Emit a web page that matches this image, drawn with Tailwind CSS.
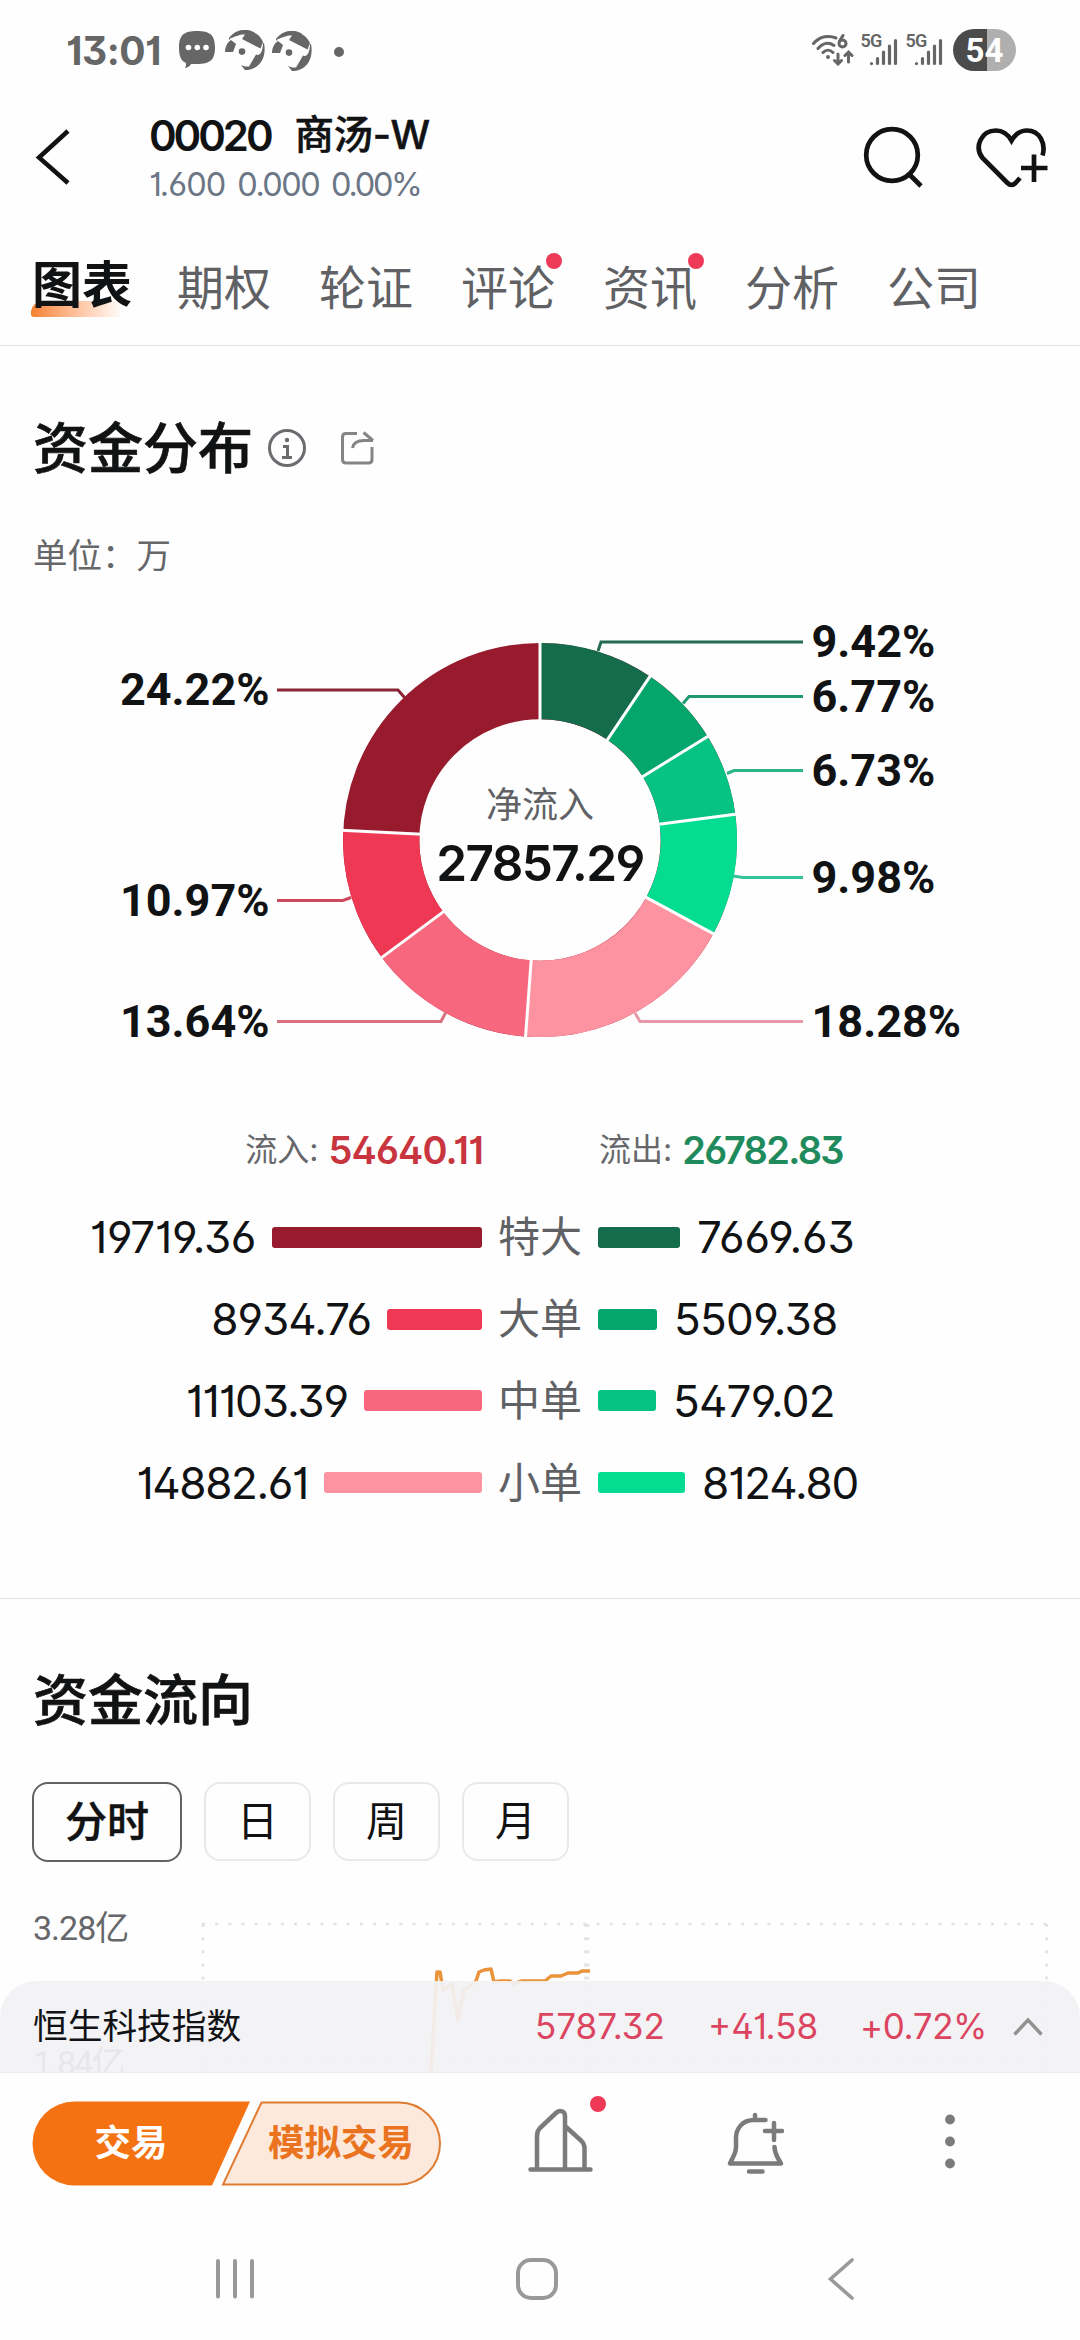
<!DOCTYPE html>
<html lang="zh-CN">
<head>
<meta charset="utf-8">
<title>00020 商汤-W</title>
<script src="https://cdn.jsdelivr.net/npm/@tailwindcss/browser@4"></script>
</head>
<body class="bg-white">
<div class="relative flex h-[2340px] w-[1080px] flex-col overflow-hidden bg-[#fefefe] font-[Inter,'Noto_Sans_CJK_SC',sans-serif] leading-none text-[#111213] [font-feature-settings:'ss01','cv01']">

  <!-- status bar -->
  <div class="flex h-[100px] items-center pl-[66px] pr-[64px] text-[#666]">
    <span class="w-[113px] text-[39px] font-bold tracking-[-0.5px]">13:01</span>
    <svg class="h-[38px] w-[36px]" viewBox="0 0 36 38" fill="#666"><path d="M18 0C31 0 36 4 36 16.500S31 33 18 33H12C11 35 9 36.500 6 37C7 35.500 7 34 7 32C2 30 0 25 0 16.500C0 4 5 0 18 0Z"/><g fill="#fff"><circle cx="9.500" cy="16.500" r="2.800"/><circle cx="18.300" cy="16.500" r="2.800"/><circle cx="27" cy="16.500" r="2.800"/></g></svg>
    <svg class="ml-[10px] h-[40px] w-[40px]" viewBox="0 0 40 40" fill="#666"><path id="bird" d="M6 8C14 -2 32 -2 38 12L35.500 18.500L17 9L20 4.500C14 4 10 7 6 8ZM0 22C0 17 2.500 12 6 10L11 14L8 22ZM4 8C12 -3 26 -1 30 3L20 2C12 2 8 6 4 10ZM39 13C42 28 34 40 20 40L16 35L20 36.500H24L31 24.500C36 27 38 19 38 13ZM17 18.300A3.300 3.300 0 1 1 17 24.900A3.300 3.300 0 1 1 17 18.300Z"/></svg>
    <svg class="ml-[7px] mt-[2px] h-[40px] w-[40px]" viewBox="0 0 40 40" fill="#666"><use href="#bird"/></svg>
    <span class="ml-[22px] mt-[3px] size-[10px] rounded-full bg-[#666]"></span>
    <svg class="ml-auto h-[32px] w-[42px]" viewBox="0 0 42 32" fill="none" stroke="#666" stroke-width="3" stroke-linecap="round"><path d="M1.500 9.500C8 2 17 1 24 4M6 14.500C11 8.500 17 8 22 11.500M11 18.500C14 15.500 18 15.500 21 18.500M26 20V30M22.500 26.500L26 30L29.500 26.500M36.500 28V18M33 21.500L36.500 18L40 21.500"/><circle cx="16" cy="23" r="1" fill="#666" stroke-width="2"/><path d="M31 1.500L27.500 7" /><circle cx="30.500" cy="9.500" r="3.500"/></svg>
    <svg class="ml-[6px] h-[40px] w-[39px]" viewBox="-1 -4 39 40" fill="#666"><text x="-0.500" y="12.500" font-family="Roboto" font-size="18" font-weight="600" letter-spacing="-0.800">5G</text><path stroke="#666" stroke-width="3.200" stroke-linecap="round" d="M10.500 29.500V29.600M16.500 24.500V29.500M22.500 18V29.500M28.500 12V29.500M34.500 6.500V29.500"/></svg>
    <svg class="ml-[6px] h-[40px] w-[39px]" viewBox="-1 -4 39 40" fill="#666"><text x="-0.500" y="12.500" font-family="Roboto" font-size="18" font-weight="600" letter-spacing="-0.800">5G</text><path stroke="#666" stroke-width="3.200" stroke-linecap="round" d="M10.500 29.500V29.600M16.500 24.500V29.500M22.500 18V29.500M28.500 12V29.500M34.500 6.500V29.500"/></svg>
    <div class="ml-[9px] flex h-[42px] w-[63px] items-center justify-center rounded-full bg-linear-to-r from-[#4b4b4b] from-54% to-[#afafaf] to-54% font-[Roboto] text-[33px] font-bold text-white">54</div>
  </div>

  <!-- header -->
  <div class="flex h-[132px] items-start pl-[34px]">
    <svg class="mt-[28px] h-[60px] w-[38px]" viewBox="0 0 38 60" fill="none" stroke="#111213" stroke-width="4.500"><path d="M34 3L5 29.500L34 55"/></svg>
    <div class="ml-[77px] mt-[15px]">
      <div class="flex items-center text-[42px] font-medium"><span class="tracking-[-3.100px] font-semibold">00020</span><span class="ml-[24px] text-[39.500px] tracking-[-0.400px] [-webkit-text-stroke:0.5px]">商汤-W</span></div>
      <div class="mt-[12px] flex gap-[12px] text-[32.500px] text-[#6b7686]"><span class="tracking-[-0.900px]">1.600</span><span class="tracking-[-1.600px]">0.000</span><span class="tracking-[-2.300px]">0.00%</span></div>
    </div>
    <svg class="ml-auto mt-[24px] h-[68px] w-[62px]" viewBox="0 0 62 68" fill="none" stroke="#111213" stroke-width="4.700"><circle cx="30" cy="31" r="25.800"/><path d="M47 50L59 62"/></svg>
    <svg class="ml-[52px] mr-[32px] mt-[25px] h-[66px] w-[72px]" viewBox="0 0 72 66" fill="none" stroke="#111213" stroke-width="4.700"><path d="M66.500 30.500C70 19 64 5.500 51 5.500C44 5.500 39 9.500 35.500 15.500C32 9.500 27 5.500 20 5.500C5 5.500 -2 22 6.500 33L31.500 58C34 60.500 37 60.500 39.500 58L44 53M58 29.500V57M45 43H71.500"/></svg>
  </div>

  <!-- tabs -->
  <div class="flex h-[114px] items-start whitespace-nowrap border-b-[1.500px] border-[#e2e2e4] pl-[32px] pt-[32px] text-[47px] text-[#606165]">
    <div class="relative mr-[46px] w-[99px]"><div class="absolute -left-[1px] top-[37px] h-[16px] w-[92px] rounded-tl-[12px] rounded-bl-[3px] bg-linear-to-r from-[#f5812b] to-[#fefefe]"></div><span class="relative -mt-[4px] block text-[50px] font-bold text-[#111213]">图表</span></div>
    <div class="mr-[48px]">期权</div>
    <div class="mr-[48px]">轮证</div>
    <div class="relative mr-[48px]">评论<i class="absolute -top-[11px] left-[85px] size-[16px] rounded-full bg-[#ee3a56]"></i></div>
    <div class="relative mr-[48px]">资讯<i class="absolute -top-[11px] left-[85px] size-[16px] rounded-full bg-[#ee3a56]"></i></div>
    <div class="mr-[48px]">分析</div>
    <div>公司</div>
  </div>

  <!-- capital distribution -->
  <section class="flex h-[1253px] flex-col border-b-[1.500px] border-[#e2e2e4]">
    <div class="mt-[74px] flex h-[56px] items-center pl-[33px]">
      <h2 class="text-[55px] font-medium [-webkit-text-stroke:0.7px]">资金分布</h2>
      <svg class="ml-[14px] size-[40px]" viewBox="0 0 40 40" fill="none" stroke="#6b6c70" stroke-width="3"><circle cx="20" cy="20" r="17.500"/><path d="M16 18.500H20.500V29M15 29.500H25"/><circle cx="20" cy="12" r="1.200" fill="#6b6c70" stroke-width="2"/></svg>
      <svg class="ml-[33px] h-[36px] w-[36px]" viewBox="0 0 36 36" fill="none" stroke="#858588" stroke-width="3"><path d="M17 3.500H6Q2.500 3.500 2.500 7V29.500Q2.500 33 6 33H28.500Q32 33 32 29.500V17M12.500 18C13.500 12.500 18 10.500 24 10.500H33M23.500 2.500L33 10.500"/></svg>
    </div>
    <div class="mt-[63px] h-[34px] pl-[33px] text-[34.500px] text-[#66676b]">单位：万</div>

    <svg class="h-[540px] w-[1080px] shrink-0" viewBox="0 573 1080 540" fill="none">
      <!-- ring: outer radius 197, inner radius 120.7, centred on 540,840 -->
      <circle cx="540" cy="840" r="158.850" stroke="#971b2d" stroke-width="76.300"/>
      <g stroke-width="76.300">
        <path stroke="#ef3854" d="M412.470 934.710A158.850 158.850 0 0 1 381.350 832.120"/>
        <path stroke="#f7687f" d="M528.370 998.420A158.850 158.850 0 0 1 412.470 934.710"/>
        <path stroke="#fd92a1" d="M679.730 915.550A158.850 158.850 0 0 1 528.370 998.420"/>
        <path stroke="#04dc92" d="M697.490 819.270A158.850 158.850 0 0 1 679.730 915.550"/>
        <path stroke="#06c384" d="M675.150 756.530A158.850 158.850 0 0 1 697.490 819.270"/>
        <path stroke="#04a66d" d="M628.600 708.150A158.850 158.850 0 0 1 675.150 756.530"/>
        <path stroke="#146c4d" d="M540 681.150A158.850 158.850 0 0 1 628.600 708.150"/>
      </g>
      <g stroke="#fefefe" stroke-width="3">
        <path d="M540 722V641"/>
        <path d="M540 722V641" transform="rotate(33.900 540 840)"/>
        <path d="M540 722V641" transform="rotate(58.300 540 840)"/>
        <path d="M540 722V641" transform="rotate(82.500 540 840)"/>
        <path d="M540 722V641" transform="rotate(118.400 540 840)"/>
        <path d="M540 722V641" transform="rotate(184.200 540 840)"/>
        <path d="M540 722V641" transform="rotate(233.400 540 840)"/>
        <path d="M540 722V641" transform="rotate(272.800 540 840)"/>
      </g>
      <g stroke-width="3">
        <path stroke="#246b52" d="M598 651L601 642H803"/>
        <path stroke="#1f9a70" d="M683 703.500L689 696.500H803"/>
        <path stroke="#2bb489" d="M727 773.500L734 770.500H803"/>
        <path stroke="#35c399" d="M733 876L743 877.500H803"/>
        <path stroke="#e69aa8" d="M635 1013L640 1021.500H803"/>
        <path stroke="#8a2535" d="M404.500 697.500L398 690H277"/>
        <path stroke="#cc4a60" d="M351 897.500L343 900.500H277"/>
        <path stroke="#d9707f" d="M446 1012L441 1021.500H277"/>
      </g>
      <g class="[font-feature-settings:normal]" fill="#111213" font-family="Roboto" font-weight="700" font-size="45">
        <text x="811.500" y="657">9.42%</text>
        <text x="811.500" y="712">6.77%</text>
        <text x="811.500" y="786">6.73%</text>
        <text x="811.500" y="893">9.98%</text>
        <text x="811.500" y="1037">18.28%</text>
        <text x="269.500" y="705" text-anchor="end">24.22%</text>
        <text x="269.500" y="916" text-anchor="end">10.97%</text>
        <text x="269.500" y="1037" text-anchor="end">13.64%</text>
      </g>
      <text x="540" y="818" font-size="36" fill="#606165" text-anchor="middle">净流入</text>
      <text x="540" y="881" font-size="49.500" font-weight="600" letter-spacing="-1.600" fill="#111213" text-anchor="middle">27857.29</text>
    </svg>

    <div class="mt-[18px] flex h-[38px] items-center text-[32px] text-[#66676b]">
      <div class="flex w-[483px] items-center justify-end">流入:<span class="ml-[10px] text-[38px] font-semibold tracking-[-0.900px] text-[#c9353f]">54640.11</span></div>
      <div class="ml-[116px] flex items-center">流出:<span class="ml-[10px] text-[38px] font-semibold tracking-[-1.700px] text-[#1f8a5c]">26782.83</span></div>
    </div>

    <div class="mt-[27.500px] flex flex-col text-[44px]">
      <div class="flex h-[81.800px] items-center"><div class="flex w-[482px] items-center justify-end gap-[16px]"><span class="tracking-[-0.400px]">19719.36</span><i class="h-[21px] w-[210px] rounded-[3px] bg-[#971b2d]"></i></div><span class="w-[116px] text-center text-[42px] text-[#606165]">特大</span><i class="mr-[17px] h-[21px] w-[82px] rounded-[3px] bg-[#146c4d]"></i><span class="tracking-[-0.100px]">7669.63</span></div>
      <div class="flex h-[81.800px] items-center"><div class="flex w-[482px] items-center justify-end gap-[16px]"><span class="tracking-[-1px]">8934.76</span><i class="h-[21px] w-[95px] rounded-[3px] bg-[#ef3854]"></i></div><span class="w-[116px] text-center text-[42px] text-[#606165]">大单</span><i class="mr-[17px] h-[21px] w-[59px] rounded-[3px] bg-[#04a66d]"></i><span class="tracking-[-0.700px]">5509.38</span></div>
      <div class="flex h-[81.800px] items-center"><div class="flex w-[482px] items-center justify-end gap-[16px]"><span class="tracking-[-1.100px]">11103.39</span><i class="h-[21px] w-[118px] rounded-[3px] bg-[#f7687f]"></i></div><span class="w-[116px] text-center text-[42px] text-[#606165]">中单</span><i class="mr-[17px] h-[21px] w-[58px] rounded-[3px] bg-[#06c384]"></i><span class="tracking-[-0.800px]">5479.02</span></div>
      <div class="flex h-[81.800px] items-center"><div class="flex w-[482px] items-center justify-end gap-[16px]"><span class="tracking-[-1.400px]">14882.61</span><i class="h-[21px] w-[158px] rounded-[3px] bg-[#fd92a1]"></i></div><span class="w-[116px] text-center text-[42px] text-[#606165]">小单</span><i class="mr-[17px] h-[21px] w-[87px] rounded-[3px] bg-[#04dc92]"></i><span class="tracking-[-1.200px]">8124.80</span></div>
    </div>
  </section>

  <!-- capital flow -->
  <section class="flex h-[473px] flex-col">
    <h2 class="mt-[74px] pl-[33px] text-[55px] font-medium [-webkit-text-stroke:0.7px]">资金流向</h2>
    <div class="mt-[54px] flex gap-[22px] pl-[32px] text-[42px]">
      <div class="flex h-[80px] w-[150px] items-center justify-center rounded-[16px] border-2 border-[#626367] font-medium [-webkit-text-stroke:0.5px]">分时</div>
      <div class="flex h-[79px] w-[107px] items-center justify-center rounded-[16px] border-2 border-[#e9e9ec] text-[41px]">日</div>
      <div class="flex h-[79px] w-[107px] items-center justify-center rounded-[16px] border-2 border-[#e9e9ec] text-[41px]">周</div>
      <div class="flex h-[79px] w-[107px] items-center justify-center rounded-[16px] border-2 border-[#e9e9ec] text-[41px]">月</div>
    </div>
    <svg class="h-[210px] w-[1080px] shrink-0" viewBox="0 1862 1080 210" fill="none">
      <g stroke="#e2e2e2" stroke-width="2.600" stroke-dasharray="3 10.150">
        <path d="M202 1924H1048M202 2058H1048M203 1924V2072M585.500 1924V2072M1046.500 1924V2072"/>
        <path d="M588 1924V2072"/>
      </g>
      <g font-family="Roboto, 'Noto Sans CJK SC'" font-size="34" fill="#66676b"><text x="33" y="1939.500" letter-spacing="-1">3.28亿</text><text x="33" y="2075" letter-spacing="-2">1.84亿</text></g>
      <path stroke="#e9933a" stroke-width="3.500" stroke-linejoin="round" d="M431 2072L434 2020L437 1972H440L443 1990L452 1984L458 2020L464 1990L470 1986L476 1981L479 1972L484 1970L491 1969L494 1982L500 1981H510L513 1984L522 1981H545L551 1976H561L568 1973H578L582 1971H590"/>
    </svg>
  </section>

  <!-- action bar -->
  <div class="flex h-[136px] items-start border-t border-[#ececee] bg-[#fefefe] pt-[28px]">
    <svg class="ml-[32px] h-[85px] w-[410px]" viewBox="0 0 410 85"><path fill="#f47212" d="M42.500 0.500H218L180 84.500H42.500A42 42 0 0 1 42.500 0.500Z"/><path fill="#fde9db" stroke="#de7c33" stroke-width="2" d="M229.500 1.500H367A41 41 0 0 1 367 83.500H191Z"/><g font-size="36.500" font-weight="700" text-anchor="middle"><text x="99" y="55" fill="#fff">交易</text><text x="309" y="55" fill="#ea7320">模拟交易</text></g></svg>
    <div class="relative ml-[85px] mt-[5px]">
      <svg class="h-[68px] w-[68px]" viewBox="526 2106 68 68" fill="none" stroke="#7b7b7b" stroke-width="4.500" stroke-linecap="round" stroke-linejoin="round"><path d="M529.500 2169.500H589.500M536 2169V2136Q536 2131 539 2128L555.500 2112.500C559 2109.500 564 2111 564 2116V2169M564 2126L580.500 2141Q583.500 2144 583.500 2148V2169"/></svg>
      <i class="absolute -top-[10px] left-[63px] size-[16px] rounded-full bg-[#ee3a56]"></i>
    </div>
    <svg class="ml-[130px] mt-[5px] h-[70px] w-[62px]" viewBox="724 2106 62 70" fill="none" stroke="#7b7b7b" stroke-width="4.500" stroke-linecap="round" stroke-linejoin="round"><path d="M754 2115V2119M764.500 2120H753C741 2120 735 2129 735 2138V2147C735 2154 731 2158 729 2163.500H780C777 2158 774 2155 773.500 2147M773 2123V2140M764 2131H781M748 2171.500H761.500"/></svg>
    <svg class="ml-[156px] mt-[10px] h-[60px] w-[14px]" viewBox="0 0 14 60" fill="#7b7b7b"><circle cx="7" cy="8.500" r="4.900"/><circle cx="7" cy="30.500" r="4.900"/><circle cx="7" cy="52.500" r="4.900"/></svg>
  </div>

  <!-- system navigation -->
  <div class="flex h-[132px] items-start pt-[50px]">
    <svg class="ml-[215px] h-[42px] w-[40px]" viewBox="0 0 40 42" stroke="#999" stroke-width="4" stroke-linecap="round"><path d="M3 3V38.500M20 3V38.500M37 3V38.500"/></svg>
    <div class="ml-[261px] h-[42px] w-[42px] rounded-[15px] border-4 border-[#999]"></div>
    <svg class="ml-[268px] h-[42px] w-[30px]" viewBox="0 0 30 42" fill="none" stroke="#999" stroke-width="3.600" stroke-linecap="round"><path d="M26 2L4.500 21L26 40"/></svg>
  </div>

  <!-- index ticker over the chart -->
  <div class="absolute left-0 top-[1981px] flex h-[91px] w-full items-center rounded-t-[36px] bg-[#f2f2f5]/92 pl-[33px] text-[34.700px]">
    <span>恒生科技指数</span>
    <div class="ml-auto flex text-[35px] text-[#dc4560]"><span class="w-[173px]">5787.32</span><span class="w-[152px]">+41.58</span><span class="w-[153px] tracking-[-0.400px]">+0.72%</span></div>
    <svg class="mr-[37px] h-[20px] w-[30px]" viewBox="0 0 30 20" fill="none" stroke="#929292" stroke-width="3.500"><path d="M1.500 17.500L15 3L28.500 17.500"/></svg>
  </div>
</div>
</body>
</html>
